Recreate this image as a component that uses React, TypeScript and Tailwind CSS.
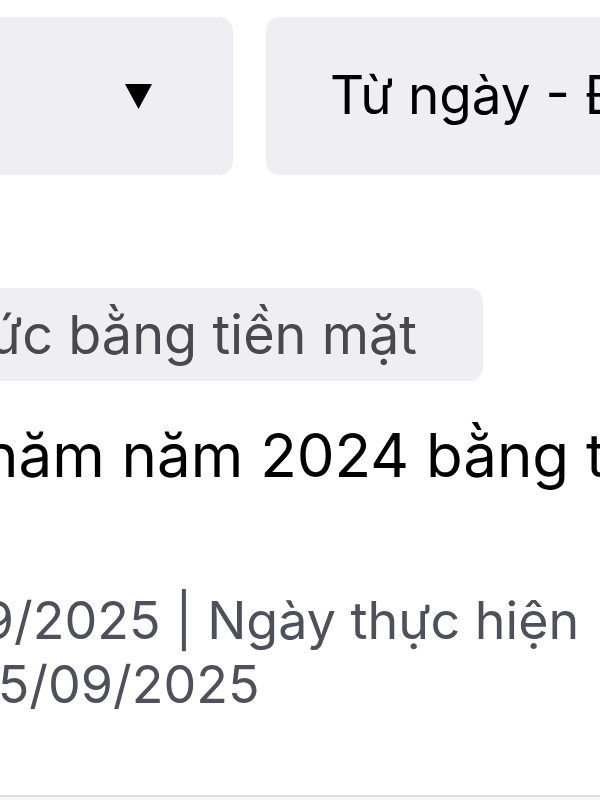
const font = { fontFamily: "Inter, 'Noto Sans', sans-serif" };

function FilterRow() {
  return (
    <div className="flex h-[158px] gap-[33px]">
      <button
        type="button"
        className="-ml-[27px] flex w-[260px] shrink-0 items-center justify-end rounded-[14px] bg-[#efeff1] pr-[81px]"
      >
        <svg width="27" height="25" viewBox="0 0 27 25">
          <path d="M0 0 H27 L13.5 25 Z" fill="#000" />
        </svg>
      </button>
      <button
        type="button"
        className="flex w-[420px] shrink-0 items-center rounded-[14px] bg-[#efeff1] pl-[64px] text-[53px] whitespace-nowrap text-black"
      >
        Từ ngày - Đến ngày
      </button>
    </div>
  );
}

export default function App() {
  return (
    <div style={font} className="relative flex h-[800px] w-[600px] flex-col overflow-hidden bg-white pt-[17px]">
      <FilterRow />

      {/* chip is anchored on its right edge, the start runs off the left side */}
      <div className="mt-[113px] flex w-[483px] justify-end">
        <span className="flex h-[93px] shrink-0 items-center rounded-[14px] bg-[#efeff1] pr-[66px] pl-6 text-[54px] whitespace-nowrap text-[#48484d]">
          Thanh toán cổ tức bằng tiền mặt
        </span>
      </div>

      <p className="mt-[38px] -ml-[17px] text-[60px] leading-[72px] whitespace-nowrap text-black">
        năm năm 2024 bằng tiền mặt
      </p>

      <div className="mt-[98px] text-[52px] leading-[64px] whitespace-nowrap text-[#4f505a]">
        <p className="-ml-[51px]">
          09/2025 | Ngày thực hiện<span className="ml-[24px]">25/09/2025</span>
        </p>
        <p className="-ml-[34px]">25/09/2025</p>
      </div>

      <div className="mt-auto h-[5px] border-t-2 border-[#dcdbe3] bg-[#f7f7f9]" />
    </div>
  );
}
